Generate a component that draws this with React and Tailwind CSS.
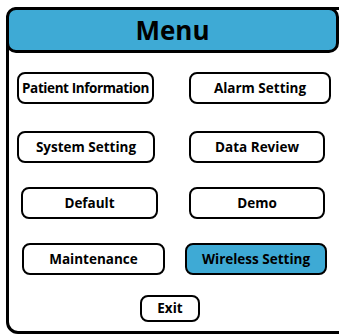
export default function App() {
  const btn =
    "h-[32px] flex items-center justify-center border-[2.5px] border-black rounded-[8px] bg-white text-[13.5px] font-bold text-black whitespace-nowrap overflow-hidden";
  return (
    <div className="w-[339px] h-[334px] overflow-hidden bg-white" style={{ fontFamily: "'Open Sans', 'Noto Sans', sans-serif" }}>
      <div className="ml-[6px] mt-[7px] w-[345px] h-[327px] border-[3px] border-black rounded-[12px] relative">
        <div className="-ml-[3px] -mt-[3px] w-[333px] h-[46px] border-[3px] border-black rounded-[10px] bg-[#3eaad5] flex items-center justify-center">
          <span className="text-[26px] font-bold text-black leading-none">Menu</span>
        </div>
        <div className="flex flex-col">
          <div className="flex mt-[19px]">
            <div className={`${btn} ml-[8px] w-[137px] tracking-[-0.4px]`}>Patient Information</div>
            <div className={`${btn} ml-[35px] w-[142px]`}>Alarm Setting</div>
          </div>
          <div className="flex mt-[27px]">
            <div className={`${btn} ml-[8px] w-[138px]`}>System Setting</div>
            <div className={`${btn} ml-[34px] w-[136px]`}>Data Review</div>
          </div>
          <div className="flex mt-[24px]">
            <div className={`${btn} ml-[12px] w-[137px]`}>Default</div>
            <div className={`${btn} ml-[31px] w-[136px]`}>Demo</div>
          </div>
          <div className="flex mt-[24px]">
            <div className={`${btn} ml-[13px] w-[143px]`}>Maintenance</div>
            <div className={`${btn} ml-[20px] w-[142px] !bg-[#3eaad5]`}>Wireless Setting</div>
          </div>
          <div className="flex mt-[20px]">
            <div className={`${btn} !h-[27px] ml-[131px] w-[60px]`}>Exit</div>
          </div>
        </div>
      </div>
    </div>
  );
}
